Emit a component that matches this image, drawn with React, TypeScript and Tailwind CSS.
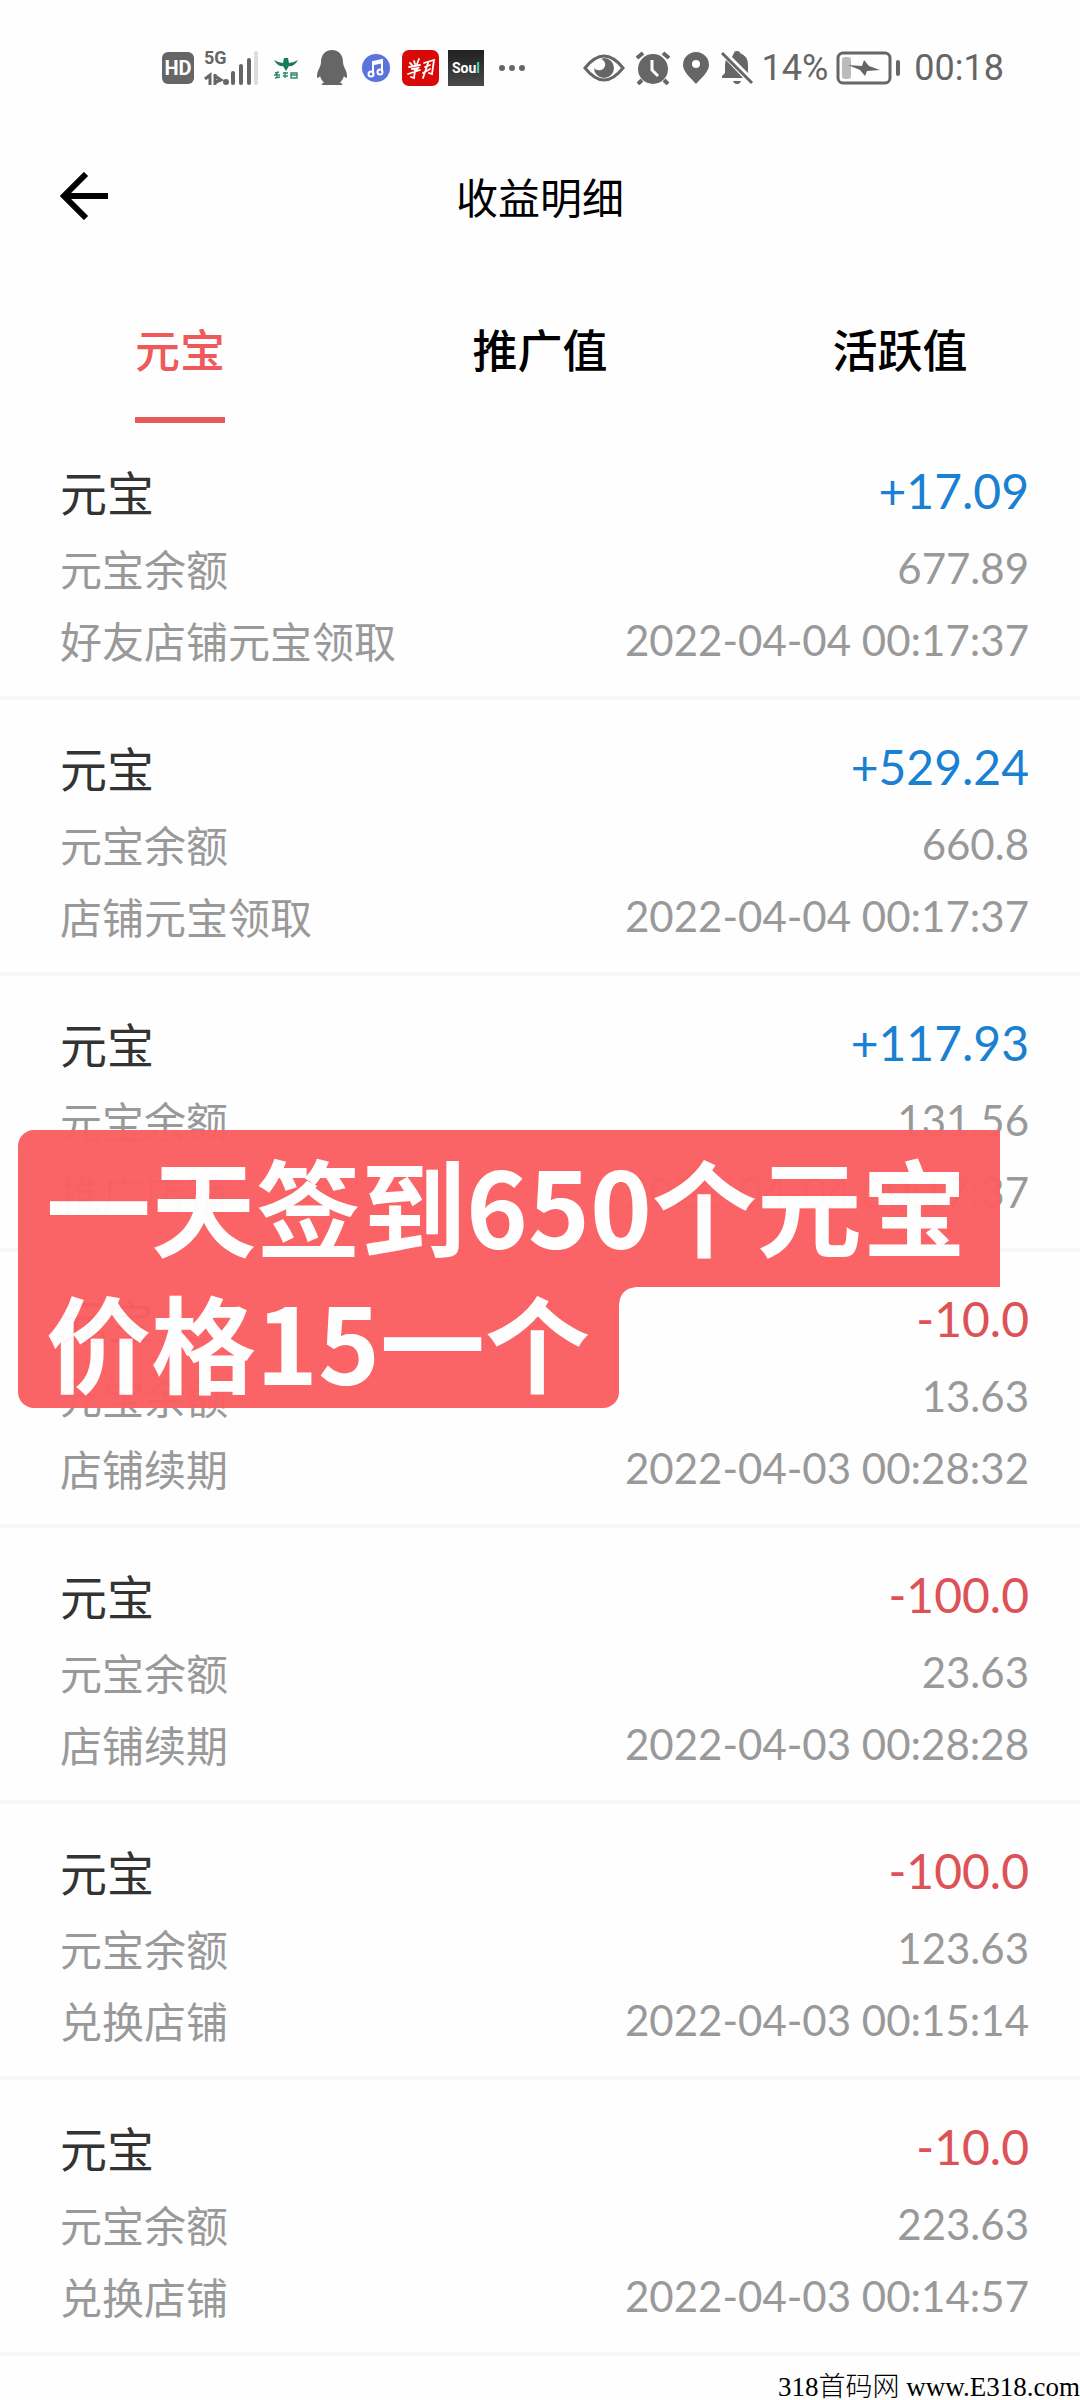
import type { ReactNode } from "react";

interface Entry {
  id: number;
  amount: string;
  balance: string;
  source: string;
  time: string;
}

const TABS = ["元宝", "推广值", "活跃值"];

const ENTRIES: Entry[] = [
  { id: 1, amount: "+17.09", balance: "677.89", source: "好友店铺元宝领取", time: "2022-04-04 00:17:37" },
  { id: 2, amount: "+529.24", balance: "660.8", source: "店铺元宝领取", time: "2022-04-04 00:17:37" },
  { id: 3, amount: "+117.93", balance: "131.56", source: "推广店铺", time: "2022-04-04 00:17:37" },
  { id: 4, amount: "-10.0", balance: "13.63", source: "店铺续期", time: "2022-04-03 00:28:32" },
  { id: 5, amount: "-100.0", balance: "23.63", source: "店铺续期", time: "2022-04-03 00:28:28" },
  { id: 6, amount: "-100.0", balance: "123.63", source: "兑换店铺", time: "2022-04-03 00:15:14" },
  { id: 7, amount: "-10.0", balance: "223.63", source: "兑换店铺", time: "2022-04-03 00:14:57" },
];

function Icon({ w, h, children }: { w: number; h: number; children: ReactNode }) {
  return (
    <svg width={w} height={h} viewBox={`0 0 ${w} ${h}`} className="flex-shrink-0" fill="#666" aria-hidden="true">
      {children}
    </svg>
  );
}

function StatusBar() {
  return (
    <div className="flex h-[136px] items-center justify-between pr-[76px] pl-[162px] text-[#666]">
      <div className="flex items-center">
        <span className="flex h-8 w-8 items-center justify-center rounded-[6px] bg-[#666] font-['Roboto',sans-serif] text-[20px] font-bold text-white">
          HD
        </span>
        <span className="relative ml-[10px] h-9 w-[54px]">
          <span className="absolute top-0 left-0 font-['Roboto',sans-serif] text-[18px] leading-[16px] font-bold">5G</span>
          <Icon w={54} h={36}>
            <path d="M1 29L6 25V35M11 24V35M11 26L17 30L12 32" fill="none" stroke="#666" strokeWidth="3" />
            <circle cx="22" cy="32" r="3" />
            <rect x="27" y="21" width="4" height="14" rx="2" />
            <rect x="35" y="14" width="4" height="21" rx="2" />
            <rect x="43" y="8" width="4" height="27" rx="2" />
            <rect x="50" y="1" width="4" height="34" rx="2" fill="#ddd" />
          </Icon>
        </span>
        <span className="ml-[14px] flex">
          <Icon w={28} h={28}>
            <path d="M2 6Q7 9 11 9L12 4H16L17 9Q21 9 26 6Q22 13 17 12L14 17L11 12Q6 13 2 6Z" fill="#1b7a5e" />
            <path d="M3 19l4-1M5 18v6M2 21h6M3 24l5-1M11 19h5M11 22h5M13 18v6M19 19h6v5h-6zM19 21h6" fill="none" stroke="#2c8a6d" strokeWidth="1.4" />
          </Icon>
        </span>
        <span className="ml-4 flex">
          <Icon w={32} h={36}>
            <path d="M16 0C9 0 5 5 5 12C5 17 1 20 1 26C1 29 3 28 4 26C5 30 7 31 8 33C6 33 5 34 6 35H26C27 34 26 33 24 33C25 31 27 30 28 26C29 28 31 29 31 26C31 20 27 17 27 12C27 5 23 0 16 0Z" />
          </Icon>
        </span>
        <span className="ml-[13px] flex">
          <Icon w={30} h={30}>
            <circle cx="15" cy="15" r="14" fill="#5a74dc" />
            <path d="M12 21V9L21 7V19" fill="none" stroke="#fff" strokeWidth="2" />
            <path d="M12 11L21 9" stroke="#fff" strokeWidth="2.5" />
            <circle cx="10" cy="21" r="2.5" fill="none" stroke="#fff" strokeWidth="2" />
            <circle cx="19" cy="19" r="2.5" fill="none" stroke="#fff" strokeWidth="2" />
          </Icon>
        </span>
        <span className="ml-[11px] flex">
          <Icon w={37} h={36}>
            <rect width="37" height="36" rx="7" fill="#d90909" />
            <path d="M8 13l2 2M12 11l1 3M17 9l-2 5M7 17l11-2M10 19l6-1-3 4M6 24l12-4M13 20l-1 8-3-1M22 13l10-3-2 14-3-1M23 17l5-2M21 23l7-4M26 13l-5 15" fill="none" stroke="#fff" strokeWidth="1.8" strokeLinecap="round" />
          </Icon>
        </span>
        <span className="ml-[9px] flex h-9 w-9 items-center justify-center bg-gradient-to-b from-[#202020] to-[#4a4a4a] font-['Roboto',sans-serif] text-[14px] font-bold text-white">
          Sou<span className="text-[#3fd6b5]">l</span>
        </span>
        <span className="ml-[14px] flex">
          <Icon w={28} h={8}>
            <circle cx="4" cy="4" r="3" />
            <circle cx="14" cy="4" r="3" />
            <circle cx="24" cy="4" r="3" />
          </Icon>
        </span>
      </div>

      <div className="flex items-center">
        <Icon w={42} h={30}>
          <path d="M2 15Q21-9 40 15Q21 39 2 15Z" fill="none" stroke="#666" strokeWidth="3" />
          <path d="M21 5A10 10 0 1 1 11 15Q12 17 15 17A5 5 0 0 0 18 6Z" />
        </Icon>
        <span className="ml-[10px] flex">
          <Icon w={36} h={34}>
            <circle cx="18" cy="18" r="15" />
            <path d="M2 7L8 2M28 2L34 7M7 29L3 33M29 29L33 33" stroke="#666" strokeWidth="4" />
            <path d="M17 9V19L23 25" fill="none" stroke="#fff" strokeWidth="3" />
          </Icon>
        </span>
        <span className="ml-3 flex">
          <Icon w={26} h={32}>
            <path fillRule="evenodd" d="M13 0A13 13 0 0 0 0 13C0 20 8 26 13 32C18 26 26 20 26 13A13 13 0 0 0 13 0ZM13 8A4 4 0 1 1 13 16A4 4 0 0 1 13 8Z" />
          </Icon>
        </span>
        <span className="ml-[11px] flex">
          <Icon w={34} h={36}>
            <path d="M14 3Q14 1 17 1Q20 1 20 3Q28 6 28 15V23L12 7ZM6 10L23 28H2V26L5 23V15Q5 12 6 10ZM13 31H21Q20 34 17 34Q14 34 13 31Z" />
            <path d="M2 3L32 33" stroke="#666" strokeWidth="3" />
          </Icon>
        </span>
        <span className="ml-2 font-['Roboto',sans-serif] text-[36px] leading-[40px]">14%</span>
        <span className="ml-2 flex">
          <Icon w={66} h={34}>
            <rect x="2" y="2" width="52" height="30" rx="5" fill="none" stroke="#666" strokeWidth="3" />
            <rect x="6" y="6" width="9" height="22" rx="3" fill="#bbb" />
            <path d="M12 14L26 15L28 9L33 15L44 19L31 20L29 25L24 19Z" />
            <rect x="60" y="9" width="4" height="16" rx="2" />
          </Icon>
        </span>
        <span className="ml-3 font-['Roboto',sans-serif] text-[36px] leading-[40px]">00:18</span>
      </div>
    </div>
  );
}

function Header() {
  return (
    <header className="grid h-[124px] grid-cols-3 items-center px-[60px]">
      <button className="justify-self-start pb-1" aria-label="返回">
        <svg width="50" height="48" viewBox="0 0 50 48" fill="none" stroke="#000" strokeWidth="6" aria-hidden="true">
          <path d="M26 2L4 24L26 46M4 24H48" />
        </svg>
      </button>
      <h1 className="justify-self-center text-[42px] leading-[60px] whitespace-nowrap">收益明细</h1>
    </header>
  );
}

function Tabs() {
  return (
    <nav className="grid h-[164px] grid-cols-3" role="tablist">
      {TABS.map((tab, i) => (
        <button
          key={tab}
          role="tab"
          aria-selected={i === 0}
          className={`flex flex-col items-center pt-[58px] text-[45px] leading-[66px] font-medium ${
            i === 0 ? "text-[#f0595c]" : "text-black"
          }`}
        >
          {tab}
          {i === 0 && <span className="mt-[33px] h-[6px] w-[90px] bg-[#e65a5c]" />}
        </button>
      ))}
    </nav>
  );
}

function EntryRow({ entry }: { entry: Entry }) {
  const income = entry.amount.startsWith("+");
  return (
    <li className="border-b-4 border-[#f7f7f7] pt-[29px] pr-[51px] pb-[19px] pl-[60px] text-[42px] text-[#999]">
      <div className="flex justify-between">
        <span className="text-[47px] leading-[80px] text-[#333]">元宝</span>
        <span className={`text-[48px] leading-[76px] ${income ? "text-[#1a80d2]" : "text-[#dc5256]"}`}>
          {entry.amount}
        </span>
      </div>
      <div className="flex justify-between">
        <span className="leading-[74px]">元宝余额</span>
        <span className="leading-[70px]">{entry.balance}</span>
      </div>
      <div className="flex justify-between">
        <span className="leading-[70px]">{entry.source}</span>
        <time className="leading-[66px]">{entry.time}</time>
      </div>
    </li>
  );
}

// Caption sticker laid over the list
function Caption() {
  return (
    <div className="absolute top-[1130px] left-[18px] font-['Noto_Sans_CJK_SC',sans-serif] text-[105px] font-bold whitespace-nowrap text-white opacity-97">
      <div className="h-[157px] w-[982px] rounded-tl-[16px] bg-[#fb6062] pl-[28px] leading-[147px]">
        一天签到650个元宝
      </div>
      <div className="flex">
        <div className="h-[121px] w-[601px] rounded-b-[16px] bg-[#fb6062] pl-[28px] leading-[104px]">价格15一个</div>
        <div className="h-4 w-4 bg-[radial-gradient(circle_at_100%_100%,transparent_15px,#fb6062_16px)]" />
      </div>
    </div>
  );
}

export default function App() {
  return (
    <div className="relative bg-[#fefefe] font-['Lato','Noto_Sans_CJK_SC',sans-serif] text-black">
      <StatusBar />
      <Header />
      <Tabs />
      <ul>
        {ENTRIES.map((entry) => (
          <EntryRow key={entry.id} entry={entry} />
        ))}
      </ul>
      <Caption />
      <footer className="flex h-[44px] items-end justify-end font-['Liberation_Serif','Noto_Sans_CJK_SC',serif] text-[27px] leading-[26px] font-light">
        318首码网 www.E318.com
      </footer>
    </div>
  );
}
